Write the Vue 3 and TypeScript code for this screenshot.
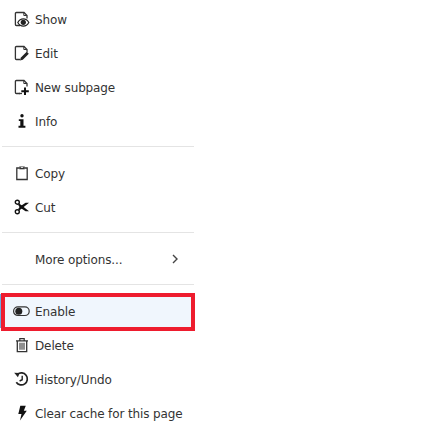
<template>
    <div class="page">
        <div class="context-menu">
            <template v-for="(group, i) in groups" :key="i">
                <div v-if="i > 0" class="divider"></div>
                <div v-for="item in group" :key="item.label" class="menu-item" :class="{ active: item.label === 'Enable' }">
                    <span class="menu-icon">
                        <svg v-if="item.icon" width="16" height="16" viewBox="0 0 16 16" v-html="icons[item.icon]"></svg>
                    </span>
                    <span class="menu-label">{{ item.label }}</span>
                    <svg v-if="item.submenu" class="chevron" width="8" height="10" viewBox="0 0 8 10">
                        <path d="M2 1l4 4-4 4" fill="none" stroke="#444" stroke-width="1.4" />
                    </svg>
                </div>
            </template>
            <div class="highlight-box"></div>
        </div>
    </div>
</template>

<script setup lang="ts">
interface MenuItem {
    label: string
    icon?: string
    submenu?: boolean
}

const doc = '<path d="M6 14.500H2.400a1 1 0 0 1-1-1V2.500a1 1 0 0 1 1-1H10l3 3v3" fill="none" stroke="#333" stroke-width="1.300"/><path d="M9.800 1.500v3h3" fill="none" stroke="#333" stroke-width="1"/>'

const icons: Record<string, string> = {
    show: doc + '<path d="M3.800 11.500c1.300-2.400 3.200-3.600 5.500-3.600s4.200 1.200 5.500 3.600c-1.300 2.400-3.200 3.600-5.500 3.600s-4.200-1.200-5.500-3.600z" fill="#fff" stroke="#222" stroke-width="1.200"/><circle cx="9.300" cy="11.300" r="2.600" fill="#222"/>',
    edit: doc + '<path d="M13.300 7.600l-6.600 6.600" stroke="#fff" stroke-width="4.500"/><path d="M6 15.500l.7-2.800 6-6 2.100 2.100-6 6z" fill="#222"/>',
    add: doc + '<path d="M5 14.500h3" stroke="#333" stroke-width="1.300"/><path d="M11 8.500v7.500M7.300 12.300h7.500" stroke="#111" stroke-width="2"/>',
    info: '<circle cx="8" cy="2.800" r="1.700" fill="#111"/><path d="M4.800 6.200h4.700v6.600h1.900v1.900H4.500v-1.900h1.800V8.100H4.800z" fill="#111"/>',
    copy: '<path d="M5.500 3H2.800v11.500h10.400V3h-2.700" fill="none" stroke="#333" stroke-width="1.300"/><path d="M5.300 1.500h5.400v2.800H5.300z" fill="#333"/><path d="M6.800 2.500h2.400" stroke="#fff" stroke-width=".8"/>',
    cut: '<circle cx="3.300" cy="3.200" r="2" fill="none" stroke="#111" stroke-width="1.400"/><circle cx="3.300" cy="12.800" r="2" fill="none" stroke="#111" stroke-width="1.400"/><path d="M4.800 4.300l2.700 1.900 7.500 6h-3.400L5.900 8.600 4.200 6z" fill="#111"/><path d="M4.800 11.700l2.700-1.900L15 3.800h-3.400L5.900 7.400 4.200 10z" fill="#111"/>',
    toggle: '<rect x="-.4" y="3.900" width="15.600" height="8.600" rx="4.300" fill="none" stroke="#333" stroke-width="1.200"/><circle cx="4.800" cy="8.200" r="3.500" fill="#222"/>',
    trash: '<path d="M2 3.800h12M5.800 3.500V1.700h4.400v1.800" fill="none" stroke="#333" stroke-width="1.200"/><path d="M3.300 4v10.600h9.400V4" fill="none" stroke="#333" stroke-width="1.300"/><path d="M6 5.800v7M8 5.800v7M10 5.800v7" stroke="#333" stroke-width="1.100"/>',
    history: '<path d="M3.500 3.300A6 6 0 1 1 2.300 11.200" fill="none" stroke="#222" stroke-width="1.700"/><path d="M.2 1.800l5.500.2-1.800 4.300z" fill="#222"/><path d="M8.200 4.800v3.900l-2.600 1.300" fill="none" stroke="#222" stroke-width="1.400"/>',
    bolt: '<path d="M6.300.8h5.500L9.800 5.800h3L6 15.500l1.500-6.500H4.300z" fill="#111"/>',
}

const groups: MenuItem[][] = [
    [
        { label: 'Show', icon: 'show' },
        { label: 'Edit', icon: 'edit' },
        { label: 'New subpage', icon: 'add' },
        { label: 'Info', icon: 'info' },
    ],
    [
        { label: 'Copy', icon: 'copy' },
        { label: 'Cut', icon: 'cut' },
    ],
    [{ label: 'More options...', submenu: true }],
    [
        { label: 'Enable', icon: 'toggle' },
        { label: 'Delete', icon: 'trash' },
        { label: 'History/Undo', icon: 'history' },
        { label: 'Clear cache for this page', icon: 'bolt' },
    ],
]
</script>

<style scoped>
.page {
    width: 445px;
    height: 432px;
    background: #fff;
    overflow: hidden;
}

.context-menu {
    position: relative;
    width: 195px;
    height: 431px;
    padding-top: 2px;
    box-sizing: border-box;
    background: #fff;
    font-family: "DejaVu Sans", Verdana, sans-serif;
    font-size: 12px;
    letter-spacing: -0.12px;
    color: #333;
}

.divider {
    height: 1px;
    margin: 8px 1px 9px 2px;
    background: #e4e4e4;
}

.menu-item {
    display: flex;
    align-items: center;
    height: 34px;
    padding: 0 14px;
    box-sizing: border-box;
}

.menu-item.active {
    background: #f0f6fd;
    box-shadow: inset 0 0 0 1px #6daae0;
}

.menu-icon {
    display: flex;
    width: 16px;
    height: 16px;
    margin-right: 5px;
    flex-shrink: 0;
}

.menu-icon svg {
    overflow: visible;
}

.menu-label {
    flex: 1;
    padding-top: 1px;
    white-space: nowrap;
}

.chevron {
    flex-shrink: 0;
    margin-right: 2px;
}

/* annotation frame drawn over the Enable row */
.highlight-box {
    position: absolute;
    left: 1px;
    top: 293px;
    width: 194px;
    height: 38px;
    box-sizing: border-box;
    border: 4px solid #ee1c2e;
}
</style>
